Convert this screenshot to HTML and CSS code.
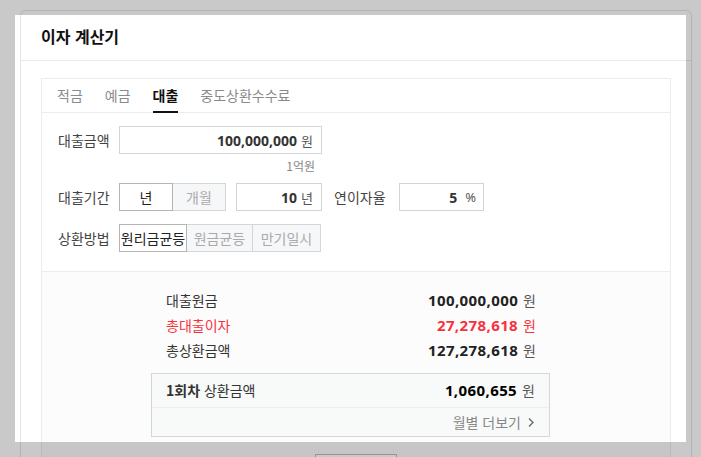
FILE: index.html
```html
<!DOCTYPE html>
<html lang="ko">

<head>
    <meta charset="UTF-8">
    <title>이자 계산기</title>
    <link rel="stylesheet" href="styles.css">
</head>

<body>
    <div class="card">
        <div class="card_head">이자 계산기</div>
        <div class="card_body">
            <div class="calc">
                <!-- 탭 -->
                <ul class="tabs">
                    <li>적금</li>
                    <li>예금</li>
                    <li class="on">대출</li>
                    <li>중도상환수수료</li>
                </ul>
                <!-- 입력 영역 -->
                <div class="form">
                    <div class="row">
                        <span class="label">대출금액</span>
                        <div class="field amount"><b>100,000,000</b><span class="unit">원</span></div>
                    </div>
                    <div class="hint">1억원</div>
                    <div class="row row_gap">
                        <span class="label">대출기간</span>
                        <div class="toggle">
                            <span class="opt sel year">년</span>
                            <span class="opt month">개월</span>
                        </div>
                        <div class="field period"><b>10</b><span class="unit">년</span></div>
                        <span class="label rate_label">연이자율</span>
                        <div class="field rate"><b>5</b><span class="unit pct">%</span></div>
                    </div>
                    <div class="row row_gap">
                        <span class="label">상환방법</span>
                        <div class="toggle">
                            <span class="opt sel m1">원리금균등</span>
                            <span class="opt m2">원금균등</span>
                            <span class="opt m3">만기일시</span>
                        </div>
                    </div>
                </div>
                <!-- 결과 영역 -->
                <div class="result">
                    <div class="sum">
                        <div class="line"><span>대출원금</span><span><b>100,000,000</b><i>원</i></span></div>
                        <div class="line red"><span>총대출이자</span><span><b>27,278,618</b><i>원</i></span></div>
                        <div class="line"><span>총상환금액</span><span><b>127,278,618</b><i>원</i></span></div>
                        <div class="box">
                            <div class="box_top"><span><strong>1회차</strong> 상환금액</span><span><b>1,060,655</b><i>원</i></span></div>
                            <div class="box_more">월별 더보기
                                <svg width="8" height="11" viewBox="0 0 8 11"><path d="M2 1.5l4 4-4 4" fill="none" stroke="#666" stroke-width="1.3"/></svg>
                            </div>
                        </div>
                    </div>
                    <!-- 화면 아래로 잘리는 버튼 -->
                    <button class="reset" aria-label="초기화"></button>
                </div>
            </div>
        </div>
    </div>
    <!-- 안내용 하이라이트 영역 -->
    <div class="spot"></div>
</body>

</html>
```

FILE: styles.css
```css
* {
    margin: 0;
    padding: 0;
    box-sizing: border-box;
}
html, body {
    height: 100%;
    overflow: hidden;
}
body {
    background-color: #fff;
    font-family: "Noto Sans CJK KR", sans-serif;
    font-size: 14px;
    color: #333;
}
ul {
    list-style: none;
}
b {
    font-family: "Noto Sans", "Noto Sans CJK KR", sans-serif;
    font-weight: 700;
}
i {
    font-style: normal;
}
/* 바깥 카드 */
.card {
    width: 672px;
    margin: 10px 0 0 20px;
    border: 1px solid #e3e4e6;
    border-radius: 6px;
    background-color: #fff;
}
.card_head {
    height: 50px;
    padding: 1px 20px 0;
    line-height: 48px;
    font-size: 16px;
    font-weight: 700;
    color: #111;
    border-bottom: 1px solid #e9e9e9;
}
.card_body {
    padding: 17px 20px 0;
}
.calc {
    border: 1px solid #ececec;
}
/* 탭 */
.tabs {
    display: flex;
    gap: 22px;
    padding-left: 15px;
    height: 34px;
    border-bottom: 1px solid #ececec;
}
.tabs li {
    height: 34px;
    line-height: 32px;
    color: #8a8a8a;
    border-bottom: 2px solid transparent;
}
.tabs li.on {
    color: #111;
    font-weight: 700;
    border-bottom-color: #111;
}
/* 입력 폼 */
.form {
    padding: 13px 16px 19px;
}
.row {
    display: flex;
    align-items: center;
    height: 28px;
}
.row_gap {
    margin-top: 13px;
}
.label {
    width: 61px;
    color: #444;
}
.field {
    display: flex;
    align-items: center;
    justify-content: flex-end;
    height: 28px;
    padding-right: 8px;
    border: 1px solid #d4d4d4;
    background-color: #fff;
}
.field b {
    font-size: 14px;
    color: #333;
}
.unit {
    margin-left: 4px;
    font-size: 13px;
    color: #555;
}
.amount {
    width: 203px;
}
.period {
    width: 86px;
    margin-left: 10px;
}
.rate_label {
    margin-left: 12px;
    width: 65px;
}
.rate {
    width: 85px;
    padding-right: 7px;
}
.pct {
    margin-left: 8px;
    font-family: "Noto Sans", sans-serif;
    font-size: 13px;
}
.hint {
    width: 264px;
    margin-top: 4px;
    padding-right: 7px;
    text-align: right;
    line-height: 16px;
    font-size: 12px;
    color: #888;
}
.hint + .row_gap {
    margin-top: 9px;
}
/* 선택 버튼 */
.toggle {
    display: flex;
}
.opt {
    height: 28px;
    line-height: 26px;
    text-align: center;
    border: 1px solid #d6d6d6;
    border-left: none;
    background-color: #f6f7f8;
    color: #aaa;
}
.opt.sel {
    border: 1px solid #b4b4b4;
    background-color: #fff;
    color: #222;
}
.year { width: 54px; }
.month { width: 53px; }
.m1 { width: 68px; }
.m2 { width: 66px; }
.m3 { width: 68px; }
/* 결과 */
.result {
    background-color: #fcfcfc;
    border-top: 1px solid #ececec;
    padding: 16px 0 30px;
}
.sum {
    width: 399px;
    margin-left: 109px;
}
.line {
    display: flex;
    justify-content: space-between;
    height: 25px;
    line-height: 25px;
    padding: 0 14px 0 15px;
    color: #333;
}
.line b, .box_top b {
    font-size: 15px;
    letter-spacing: 0.4px;
    color: #222;
}
.line i, .box_top i {
    margin-left: 5px;
    color: #555;
}
.line.red, .line.red b, .line.red i {
    color: #f5333f;
}
.box {
    margin-top: 10px;
    border: 1px solid #d6d6d6;
    background-color: #f8f9f9;
}
.box_top {
    display: flex;
    justify-content: space-between;
    height: 34px;
    line-height: 33px;
    padding: 0 14px;
    border-bottom: 1px solid #ededed;
    color: #333;
}
.box_top strong {
    font-weight: 700;
}
.box_top b {
    color: #000;
}
.box_more {
    display: flex;
    align-items: center;
    justify-content: flex-end;
    gap: 6px;
    height: 28px;
    padding-right: 14px;
    color: #888;
}
.reset {
    display: block;
    width: 82px;
    height: 34px;
    margin: 17px auto 0;
    border: 1px solid #bbb;
    background-color: #fff;
}
/* 하이라이트: 나머지 화면을 어둡게 덮는다 */
.spot {
    position: absolute;
    left: 15px;
    top: 15px;
    width: 671px;
    height: 427px;
    box-shadow: 0 0 0 2000px rgba(0, 0, 0, 0.21);
    pointer-events: none;
}
```
